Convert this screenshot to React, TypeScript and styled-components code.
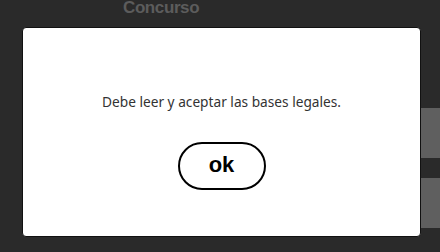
import React from "react";
import styled, { createGlobalStyle } from "styled-components";

const Global = createGlobalStyle`
  html, body { margin: 0; padding: 0; background: #2a2a2a; }
  body { width: 440px; height: 252px; overflow: hidden; }
  #root { position: relative; width: 440px; height: 252px; }
`;

const Page = styled.div`
  display: flex;
  flex-direction: column;
  width: 440px;
  height: 252px;
  background: #2a2a2a;
  overflow: hidden;
`;

const Title = styled.h1`
  margin: 0 0 0 123px;
  font-family: "Liberation Sans", Arial, sans-serif;
  font-weight: 700;
  font-size: 17px;
  line-height: 16px;
  color: #5c5c5c;
  letter-spacing: -0.4px;
`;

const Fields = styled.div`
  display: flex;
  flex-direction: column;
  gap: 20px;
  margin-top: 92px;
  padding-left: 421px;
`;

const Field = styled.div`
  height: 50px;
  background: #5f5f5f;
`;

const Overlay = styled.div`
  position: absolute;
  inset: 0;
  display: flex;
  padding: 27px 19px 15px 22px;
`;

const Dialog = styled.div`
  flex: 1;
  display: flex;
  flex-direction: column;
  align-items: center;
  box-sizing: border-box;
  background: #ffffff;
  border: 1px solid #111;
  border-radius: 4px;
  padding-top: 66px;
`;

const Message = styled.p`
  margin: 0;
  font-family: "Noto Sans", sans-serif;
  font-size: 13.7px;
  line-height: 16px;
  color: #333;
  letter-spacing: 0;
`;

const OkButton = styled.button`
  margin-top: 32px;
  width: 88px;
  height: 48px;
  box-sizing: border-box;
  border: 2px solid #000;
  border-radius: 24px;
  background: #fff;
  font-family: "Liberation Sans", Arial, sans-serif;
  font-weight: 700;
  font-size: 22px;
  color: #000;
  padding: 0 0 2px;
  cursor: pointer;
`;

export default function App() {
  return (
    <>
      <Global />
      <Page>
        <Title>Concurso</Title>
        <Fields>
          <Field />
          <Field />
        </Fields>
      </Page>
      <Overlay>
        <Dialog role="dialog">
          <Message>Debe leer y aceptar las bases legales.</Message>
          <OkButton>ok</OkButton>
        </Dialog>
      </Overlay>
    </>
  );
}
